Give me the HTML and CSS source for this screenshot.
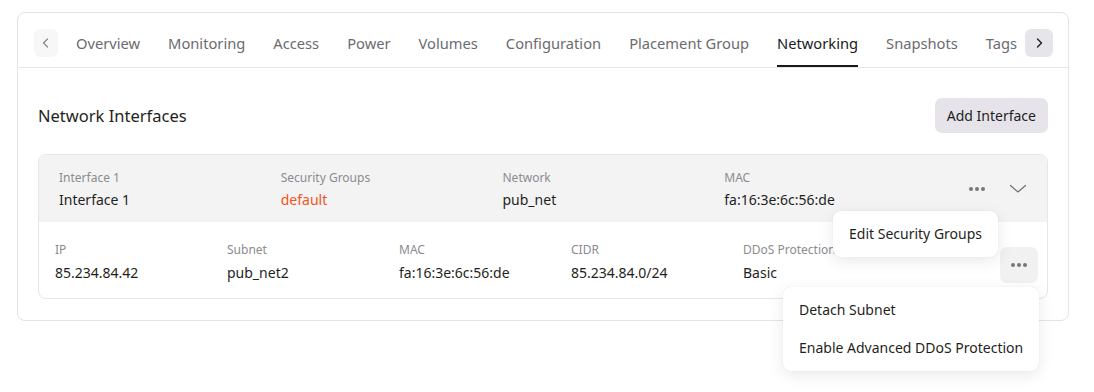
FILE: index.html
```html
<!DOCTYPE html>
<html lang="en">
<head>
    <meta charset="UTF-8">
    <meta name="viewport" content="width=device-width, initial-scale=1.0">
    <title>Server Networking</title>
    <link rel="stylesheet" href="styles.css">
</head>
<body>
    <div class="panel">
        <div class="tabbar">
            <button class="scroll-btn scroll-left" aria-label="Scroll left">
                <svg width="14" height="14" viewBox="0 0 14 14"><path d="M8.5 3 L4.5 7 L8.5 11" fill="none" stroke="#8a8a90" stroke-width="1.3" stroke-linecap="round" stroke-linejoin="round"/></svg>
            </button>
            <nav class="tabs">
                <a class="tab">Overview</a>
                <a class="tab">Monitoring</a>
                <a class="tab">Access</a>
                <a class="tab">Power</a>
                <a class="tab">Volumes</a>
                <a class="tab">Configuration</a>
                <a class="tab">Placement Group</a>
                <a class="tab active">Networking</a>
                <a class="tab">Snapshots</a>
                <a class="tab">Tags</a>
            </nav>
            <button class="scroll-btn scroll-right" aria-label="Scroll right">
                <svg width="14" height="14" viewBox="0 0 14 14"><path d="M5.5 3 L9.5 7 L5.5 11" fill="none" stroke="#1f1f22" stroke-width="1.4" stroke-linecap="round" stroke-linejoin="round"/></svg>
            </button>
        </div>

        <div class="content">
            <div class="section-head">
                <h2>Network Interfaces</h2>
                <button class="btn">Add Interface</button>
            </div>

            <div class="iface">
                <div class="iface-head">
                    <div class="field">
                        <div class="label">Interface 1</div>
                        <div class="value">Interface 1</div>
                    </div>
                    <div class="field">
                        <div class="label">Security Groups</div>
                        <div class="value link">default</div>
                    </div>
                    <div class="field">
                        <div class="label">Network</div>
                        <div class="value">pub_net</div>
                    </div>
                    <div class="field">
                        <div class="label">MAC</div>
                        <div class="value">fa:16:3e:6c:56:de</div>
                    </div>
                    <div class="head-actions">
                        <span class="dots"><i></i><i></i><i></i></span>
                        <svg width="18" height="18" viewBox="0 0 18 18"><path d="M1.5 5.5 L9 12 L16.5 5.5" fill="none" stroke="#6f6f75" stroke-width="1.2" stroke-linecap="round" stroke-linejoin="round"/></svg>
                    </div>
                </div>

                <div class="iface-body">
                    <div class="field narrow">
                        <div class="label">IP</div>
                        <div class="value">85.234.84.42</div>
                    </div>
                    <div class="field narrow">
                        <div class="label">Subnet</div>
                        <div class="value">pub_net2</div>
                    </div>
                    <div class="field narrow">
                        <div class="label">MAC</div>
                        <div class="value">fa:16:3e:6c:56:de</div>
                    </div>
                    <div class="field narrow">
                        <div class="label">CIDR</div>
                        <div class="value">85.234.84.0/24</div>
                    </div>
                    <div class="field narrow">
                        <div class="label">DDoS Protection</div>
                        <div class="value">Basic</div>
                    </div>
                    <button class="more-btn" aria-label="More"><span class="dots"><i></i><i></i><i></i></span></button>
                </div>

                <div class="menu menu-iface">
                    <div class="menu-item">Edit Security Groups</div>
                </div>
                <div class="menu menu-subnet">
                    <div class="menu-item">Detach Subnet</div>
                    <div class="menu-item">Enable Advanced DDoS Protection</div>
                </div>
            </div>
        </div>
    </div>
</body>
</html>
```

FILE: styles.css
```css
* {
    margin: 0;
    padding: 0;
    box-sizing: border-box;
}

html, body {
    min-height: 100%;
}

body {
    font-family: 'Noto Sans', 'Open Sans', sans-serif;
    background: #fff;
    color: #1f1f22;
    padding: 12px 25px 0 17px;
    min-height: 100vh;
}

button {
    font-family: inherit;
    border: none;
    cursor: pointer;
}

.panel {
    border: 1px solid #e4e4e6;
    border-radius: 8px;
    width: 1052px;
}

/* tab bar */
.tabbar {
    position: relative;
    height: 55px;
    display: flex;
    align-items: stretch;
    padding-left: 16px;
    border-bottom: 1px solid #e6e6e8;
    overflow: hidden;
}

.scroll-btn {
    width: 24px;
    height: 28px;
    border-radius: 6px;
    display: flex;
    align-items: center;
    justify-content: center;
    align-self: center;
    margin-top: 6px;
}

.scroll-left {
    background: #f7f7f8;
}

.scroll-right {
    position: absolute;
    top: 16px;
    left: 1007px;
    width: 28px;
    margin-top: 0;
    background: #e6e5ea;
}

.tabs {
    display: flex;
    gap: 28px;
    margin-left: 18px;
}

.tab {
    display: flex;
    align-items: center;
    padding-top: 7px;
    font-size: 14.7px;
    color: #6b6b70;
    white-space: nowrap;
    border-bottom: 2px solid transparent;
}

.tab.active {
    color: #1a1a1c;
    border-bottom-color: #1a1a1c;
}

/* content */
.content {
    padding: 30px 20px 21px;
}

.section-head {
    display: flex;
    align-items: center;
    justify-content: space-between;
    margin-bottom: 21px;
}

.section-head h2 {
    font-size: 16.5px;
    font-weight: 400;
    color: #1f1f22;
}

.btn {
    background: #e6e4ea;
    color: #1f1f22;
    font-size: 14px;
    height: 35px;
    padding: 0 12px;
    border-radius: 7px;
}

/* interface card */
.iface {
    position: relative;
    border: 1px solid #e6e6e8;
    border-radius: 8px;
}

.iface-head {
    display: flex;
    align-items: center;
    background: #f3f3f4;
    border-radius: 8px 8px 0 0;
    padding: 13px 20px 10px;
}

.iface-head .field {
    width: 222px;
}

.iface-head .head-actions {
    margin-top: -3px;
}

.iface-body {
    display: flex;
    align-items: flex-start;
    padding: 18px 9px 13px 16px;
}

.iface-body .value {
    margin-top: 1px;
}

.field.narrow {
    width: 172px;
}

.label {
    font-size: 12px;
    line-height: 20px;
    color: #8b8b90;
    white-space: nowrap;
}

.value {
    font-size: 14px;
    line-height: 24px;
    color: #1f1f22;
    white-space: nowrap;
}

.value.link {
    color: #f2541b;
}

.head-actions {
    display: flex;
    align-items: center;
    gap: 24px;
    margin-left: 23px;
}

.dots {
    display: inline-flex;
    gap: 2px;
}

.dots i {
    width: 4px;
    height: 4px;
    border-radius: 50%;
    background: #76767c;
}

.more-btn {
    margin-left: auto;
    width: 38px;
    height: 36px;
    border-radius: 7px;
    background: #f1f1f2;
    display: flex;
    align-items: center;
    justify-content: center;
    margin-top: 7px;
}

/* dropdown menus */
.menu {
    position: absolute;
    background: #fff;
    border-radius: 8px;
    box-shadow: 0 4px 16px rgba(0, 0, 0, 0.09), 0 0 1px rgba(0, 0, 0, 0.12);
    padding: 4px 0;
    z-index: 2;
}

.menu-item {
    font-size: 14px;
    line-height: 38px;
    padding: 0 16px;
    color: #1f1f22;
    white-space: nowrap;
}

.menu-iface {
    left: 794px;
    top: 56px;
    width: 165px;
}

.menu-subnet {
    left: 744px;
    top: 132px;
    width: 256px;
}
```
